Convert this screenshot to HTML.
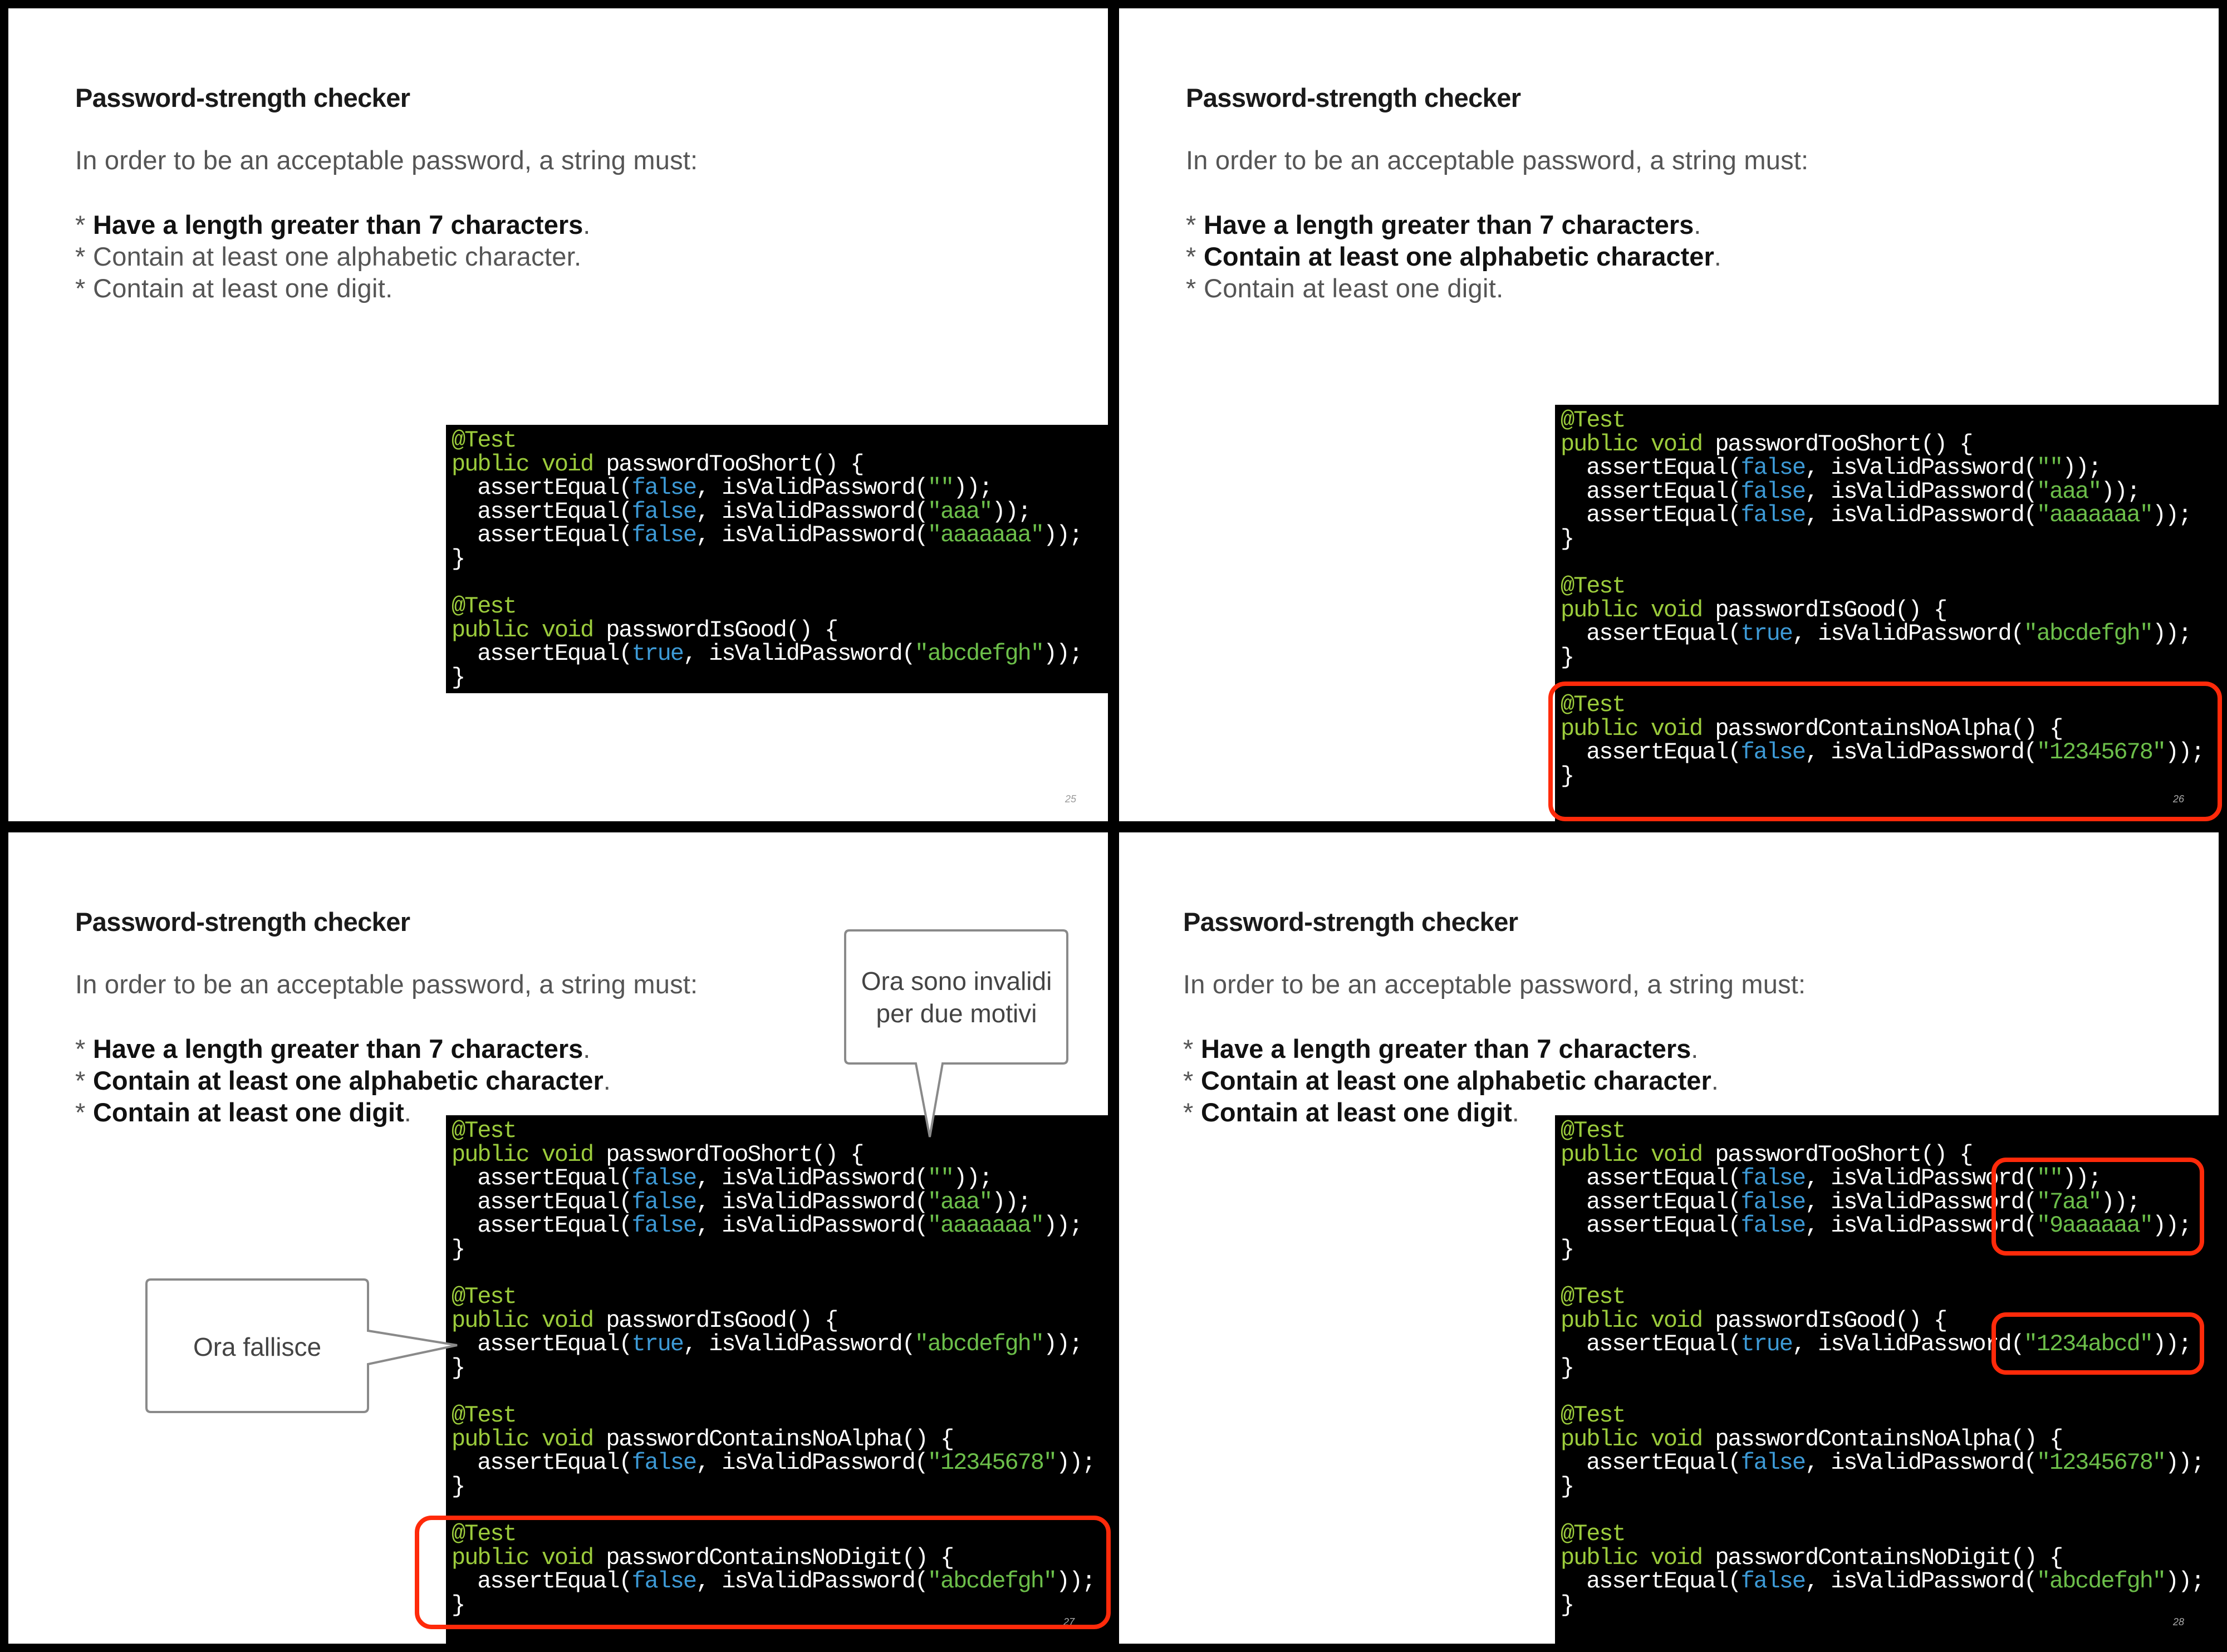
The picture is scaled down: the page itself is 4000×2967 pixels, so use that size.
<!DOCTYPE html>
<html><head><meta charset="utf-8"><style>
*{margin:0;padding:0;box-sizing:border-box}
body{width:4000px;height:2967px;background:#000;position:relative;overflow:hidden;font-family:"Liberation Sans",sans-serif}
.s{position:absolute;width:1975px;height:1460px;background:#fff;overflow:hidden}
.t{position:absolute;left:120px;top:131px;font-size:47px;line-height:60px;color:#1a1a1a;font-weight:bold;letter-spacing:-0.6px}
.sub{position:absolute;left:120px;top:243px;font-size:47px;line-height:60px;color:#555;letter-spacing:0.2px}
.b{position:absolute;left:120px;top:360px;font-size:47px;line-height:57px;color:#555;letter-spacing:0.3px}
.b b{color:#111;letter-spacing:0}
.code{position:absolute;background:#000;color:#fff;font-family:"Liberation Mono",monospace;font-size:42px;letter-spacing:-2.1px;line-height:42.6px;padding:7px 0 0 10px;white-space:pre}
.g{color:#9ccc3c}.k{color:#3d9ad6}.q{color:#6cbf4a}
.pn{position:absolute;font-size:18px;color:#999;font-style:italic}
.red{position:absolute;border:8px solid #ff2a0a;border-radius:30px}
</style></head><body>

<div class="s" style="left:15px;top:15px">
<div class="t">Password-strength checker</div>
<div class="sub">In order to be an acceptable password, a string must:</div>
<div class="b">* <b>Have a length greater than 7 characters</b>.<br>* Contain at least one alphabetic character.<br>* Contain at least one digit.</div>
<div class="code" style="left:786px;top:748px;width:1189px;height:482px"><span class="g">@Test</span>
<span class="g">public void</span> passwordTooShort() {
  assertEqual(<span class="k">false</span>, isValidPassword(<span class="q">""</span>));
  assertEqual(<span class="k">false</span>, isValidPassword(<span class="q">"aaa"</span>));
  assertEqual(<span class="k">false</span>, isValidPassword(<span class="q">"aaaaaaa"</span>));
}

<span class="g">@Test</span>
<span class="g">public void</span> passwordIsGood() {
  assertEqual(<span class="k">true</span>, isValidPassword(<span class="q">"abcdefgh"</span>));
}</div>
<div class="pn" style="left:1898px;top:1410px">25</div>
</div>

<div class="s" style="left:2010px;top:15px">
<div class="t" style="left:120px">Password-strength checker</div>
<div class="sub" style="left:120px">In order to be an acceptable password, a string must:</div>
<div class="b" style="left:120px">* <b>Have a length greater than 7 characters</b>.<br>* <b>Contain at least one alphabetic character</b>.<br>* Contain at least one digit.</div>
<div class="code" style="left:783px;top:712px;width:1192px;height:748px"><span class="g">@Test</span>
<span class="g">public void</span> passwordTooShort() {
  assertEqual(<span class="k">false</span>, isValidPassword(<span class="q">""</span>));
  assertEqual(<span class="k">false</span>, isValidPassword(<span class="q">"aaa"</span>));
  assertEqual(<span class="k">false</span>, isValidPassword(<span class="q">"aaaaaaa"</span>));
}

<span class="g">@Test</span>
<span class="g">public void</span> passwordIsGood() {
  assertEqual(<span class="k">true</span>, isValidPassword(<span class="q">"abcdefgh"</span>));
}

<span class="g">@Test</span>
<span class="g">public void</span> passwordContainsNoAlpha() {
  assertEqual(<span class="k">false</span>, isValidPassword(<span class="q">"12345678"</span>));
}</div>
<div class="pn" style="left:1893px;top:1410px;color:#aaa">26</div>
</div>

<div class="s" style="left:15px;top:1495px;height:1457px">
<div class="t">Password-strength checker</div>
<div class="sub">In order to be an acceptable password, a string must:</div>
<div class="b">* <b>Have a length greater than 7 characters</b>.<br>* <b>Contain at least one alphabetic character</b>.<br>* <b>Contain at least one digit</b>.</div>
<div class="code" style="left:786px;top:508px;width:1189px;height:949px"><span class="g">@Test</span>
<span class="g">public void</span> passwordTooShort() {
  assertEqual(<span class="k">false</span>, isValidPassword(<span class="q">""</span>));
  assertEqual(<span class="k">false</span>, isValidPassword(<span class="q">"aaa"</span>));
  assertEqual(<span class="k">false</span>, isValidPassword(<span class="q">"aaaaaaa"</span>));
}

<span class="g">@Test</span>
<span class="g">public void</span> passwordIsGood() {
  assertEqual(<span class="k">true</span>, isValidPassword(<span class="q">"abcdefgh"</span>));
}

<span class="g">@Test</span>
<span class="g">public void</span> passwordContainsNoAlpha() {
  assertEqual(<span class="k">false</span>, isValidPassword(<span class="q">"12345678"</span>));
}

<span class="g">@Test</span>
<span class="g">public void</span> passwordContainsNoDigit() {
  assertEqual(<span class="k">false</span>, isValidPassword(<span class="q">"abcdefgh"</span>));
}</div>
<div class="pn" style="left:1895px;top:1408px;color:#aaa">27</div>
</div>

<div class="s" style="left:2010px;top:1495px;height:1457px">
<div class="t" style="left:115px">Password-strength checker</div>
<div class="sub" style="left:115px">In order to be an acceptable password, a string must:</div>
<div class="b" style="left:115px">* <b>Have a length greater than 7 characters</b>.<br>* <b>Contain at least one alphabetic character</b>.<br>* <b>Contain at least one digit</b>.</div>
<div class="code" style="left:783px;top:508px;width:1192px;height:949px"><span class="g">@Test</span>
<span class="g">public void</span> passwordTooShort() {
  assertEqual(<span class="k">false</span>, isValidPassword(<span class="q">""</span>));
  assertEqual(<span class="k">false</span>, isValidPassword(<span class="q">"7aa"</span>));
  assertEqual(<span class="k">false</span>, isValidPassword(<span class="q">"9aaaaaa"</span>));
}

<span class="g">@Test</span>
<span class="g">public void</span> passwordIsGood() {
  assertEqual(<span class="k">true</span>, isValidPassword(<span class="q">"1234abcd"</span>));
}

<span class="g">@Test</span>
<span class="g">public void</span> passwordContainsNoAlpha() {
  assertEqual(<span class="k">false</span>, isValidPassword(<span class="q">"12345678"</span>));
}

<span class="g">@Test</span>
<span class="g">public void</span> passwordContainsNoDigit() {
  assertEqual(<span class="k">false</span>, isValidPassword(<span class="q">"abcdefgh"</span>));
}</div>
<div class="pn" style="left:1893px;top:1408px;color:#aaa">28</div>
</div>

<div class="red" style="left:2781px;top:1224px;width:1210px;height:251px"></div>
<div class="red" style="left:745px;top:2722px;width:1250px;height:204px"></div>
<div class="red" style="left:3577px;top:2079px;width:382px;height:176px;border-radius:26px"></div>
<div class="red" style="left:3577px;top:2357px;width:382px;height:112px;border-radius:26px"></div>

<svg width="4000" height="2967" style="position:absolute;left:0;top:0">
<path d="M1526,1671 H1909 Q1917,1671 1917,1679 V1902 Q1917,1910 1909,1910 H1693 L1670,2042 L1645,1910 H1526 Q1518,1910 1518,1902 V1679 Q1518,1671 1526,1671 Z" fill="#fff" stroke="#8a8a8a" stroke-width="4"/>
<path d="M271,2298 H653 Q661,2298 661,2306 V2390 L821,2416 L661,2450 V2528 Q661,2536 653,2536 H271 Q263,2536 263,2528 V2306 Q263,2298 271,2298 Z" fill="#fff" stroke="#8a8a8a" stroke-width="4"/>
<g font-family="Liberation Sans, sans-serif" font-size="46" fill="#444" text-anchor="middle">
<text x="1718" y="1778">Ora sono invalidi</text>
<text x="1718" y="1836">per due motivi</text>
<text x="462" y="2435">Ora fallisce</text>
</g>
</svg>
</body></html>
